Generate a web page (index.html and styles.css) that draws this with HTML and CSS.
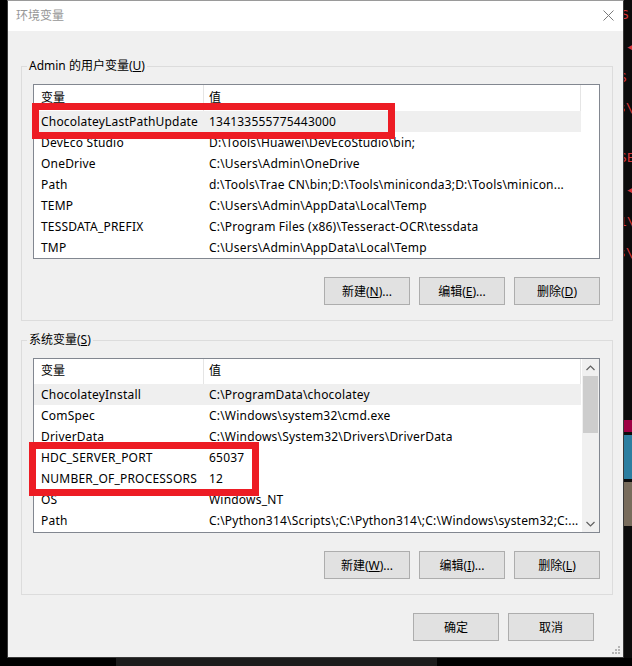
FILE: index.html
```html
<!DOCTYPE html>
<html lang="zh-CN">
<head>
<meta charset="utf-8">
<title>环境变量</title>
<link rel="stylesheet" href="styles.css">
</head>
<body>
<div class="screen">
  <div class="top">
    <div class="left-gap"></div>
    <div class="window">
      <div class="titlebar">
        <span class="title">环境变量</span>
        <svg class="close" width="11" height="11" viewBox="0 0 11 11"><path d="M0.5 0.5L10.5 10.5M10.5 0.5L0.5 10.5" stroke="#7a7a7a" stroke-width="1" fill="none"/></svg>
      </div>
      <div class="content">
        <fieldset class="group group-user">
          <legend>Admin 的用户变量(<u>U</u>)</legend>
          <div class="list">
            <div class="table">
              <div class="row head"><div class="c1">变量</div><div class="c2">值</div></div>
              <div class="row sel"><div class="c1">ChocolateyLastPathUpdate</div><div class="c2">134133555775443000</div></div>
              <div class="row"><div class="c1">DevEco Studio</div><div class="c2">D:\Tools\Huawei\DevEcoStudio\bin;</div></div>
              <div class="row"><div class="c1">OneDrive</div><div class="c2">C:\Users\Admin\OneDrive</div></div>
              <div class="row"><div class="c1">Path</div><div class="c2">d:\Tools\Trae CN\bin;D:\Tools\miniconda3;D:\Tools\minicon...</div></div>
              <div class="row"><div class="c1">TEMP</div><div class="c2">C:\Users\Admin\AppData\Local\Temp</div></div>
              <div class="row"><div class="c1">TESSDATA_PREFIX</div><div class="c2">C:\Program Files (x86)\Tesseract-OCR\tessdata</div></div>
              <div class="row"><div class="c1">TMP</div><div class="c2">C:\Users\Admin\AppData\Local\Temp</div></div>
            </div>
            <div class="annot annot-user"></div>
          </div>
          <div class="btns">
            <button class="btn">新建(<u>N</u>)...</button>
            <button class="btn">编辑(<u>E</u>)...</button>
            <button class="btn">删除(<u>D</u>)</button>
          </div>
        </fieldset>

        <fieldset class="group group-sys">
          <legend>系统变量(<u>S</u>)</legend>
          <div class="list">
            <div class="table">
              <div class="row head sys-head"><div class="c1">变量</div><div class="c2">值</div></div>
              <div class="row sel"><div class="c1">ChocolateyInstall</div><div class="c2">C:\ProgramData\chocolatey</div></div>
              <div class="row"><div class="c1">ComSpec</div><div class="c2">C:\Windows\system32\cmd.exe</div></div>
              <div class="row"><div class="c1">DriverData</div><div class="c2">C:\Windows\System32\Drivers\DriverData</div></div>
              <div class="row"><div class="c1">HDC_SERVER_PORT</div><div class="c2">65037</div></div>
              <div class="row"><div class="c1">NUMBER_OF_PROCESSORS</div><div class="c2">12</div></div>
              <div class="row"><div class="c1">OS</div><div class="c2">Windows_NT</div></div>
              <div class="row"><div class="c1">Path</div><div class="c2">C:\Python314\Scripts\;C:\Python314\;C:\Windows\system32;C:...</div></div>
            </div>
            <div class="scrollbar">
              <div class="sb-arrow"><svg width="9" height="6" viewBox="0 0 9 6"><path d="M0.5 5L4.5 1L8.5 5" stroke="#606060" stroke-width="1.2" fill="none"/></svg></div>
              <div class="sb-thumb"></div>
              <div class="sb-track"></div>
              <div class="sb-arrow"><svg width="9" height="6" viewBox="0 0 9 6"><path d="M0.5 1L4.5 5L8.5 1" stroke="#606060" stroke-width="1.2" fill="none"/></svg></div>
            </div>
            <div class="annot annot-sys"></div>
          </div>
          <div class="btns">
            <button class="btn">新建(<u>W</u>)...</button>
            <button class="btn">编辑(<u>I</u>)...</button>
            <button class="btn">删除(<u>L</u>)</button>
          </div>
        </fieldset>

        <div class="dialog-btns">
          <button class="btn">确定</button>
          <button class="btn">取消</button>
        </div>
      </div>
      <svg class="grip" width="10" height="10" viewBox="0 0 10 10">
        <rect x="7" y="0" width="2" height="2" fill="#b5b5b5"/>
        <rect x="4" y="3" width="2" height="2" fill="#b5b5b5"/>
        <rect x="7" y="3" width="2" height="2" fill="#b5b5b5"/>
        <rect x="1" y="6" width="2" height="2" fill="#b5b5b5"/>
        <rect x="4" y="6" width="2" height="2" fill="#b5b5b5"/>
        <rect x="7" y="6" width="2" height="2" fill="#b5b5b5"/>
      </svg>
    </div>
    <div class="term">
      <div class="term-text">
        <div class="tl tl1">S</div>
        <div class="tl tl2">◂</div>
        <div class="tl tl3">S</div>
        <div class="tl tl4">s\</div>
        <div class="tl tl5">SE</div>
        <div class="tl tl6">◂</div>
        <div class="tl tl7">1\</div>
        <div class="tl tl8">s\</div>
      </div>
      <div class="blk blk-red"></div>
      <div class="blk blk-teal"></div>
      <div class="blk blk-brown"></div>
    </div>
  </div>
  <div class="bottom">
    <div class="b1"></div>
    <div class="b2"></div>
    <div class="b3"></div>
  </div>
</div>
</body>
</html>
```

FILE: styles.css
```css
html, body {
  margin: 0;
  padding: 0;
  background: #000;
}

.screen {
  width: 632px;
  height: 666px;
  overflow: hidden;
  font-family: "Noto Sans", "Noto Sans CJK SC", sans-serif;
  font-size: 12px;
  color: #000;
}

.top {
  display: flex;
  height: 658px;
}

.left-gap {
  width: 7px;
  flex: none;
  background: #000;
}

.window {
  width: 617px;
  flex: none;
  box-sizing: border-box;
  border: 1px solid #3a3a3a;
  border-top-color: #9a9a9a;
  background: #f0f0f0;
  position: relative;
  display: flex;
  flex-direction: column;
}

.titlebar {
  height: 30px;
  flex: none;
  background: #fff;
  display: flex;
  align-items: center;
  justify-content: space-between;
  padding: 0 9px 0 8px;
}

.title {
  color: #969696;
  font-size: 12px;
  line-height: 16px;
}

.close {
  display: block;
  margin-top: -1px;
}

.content {
  padding: 0 10px 0 13px;
  display: flex;
  flex-direction: column;
}

.group {
  margin: 0;
  border: 1px solid #dcdcdc;
  padding: 0 12px 15px 11px;
  min-width: 0;
}

.group legend {
  padding: 0 2px;
  margin-left: -6px;
  line-height: 16px;
  font-size: 12px;
}

.group-user {
  margin-top: 27px;
}

.group-sys {
  margin-top: 11px;
}

.list {
  position: relative;
  margin-top: 10px;
  height: 175px;
  box-sizing: border-box;
  border: 1px solid #828790;
  background: #fff;
  display: flex;
}

.table {
  width: 547px;
  flex: none;
}

.row {
  display: flex;
  height: 21px;
  line-height: 21px;
  white-space: nowrap;
  letter-spacing: 0.2px;
}

.row .c1 {
  width: 170px;
  box-sizing: border-box;
  padding-left: 7px;
  flex: none;
  overflow: hidden;
}

.row .c2 {
  flex: 1;
  padding-left: 5px;
  overflow: hidden;
}

.row.head {
  height: 26px;
  line-height: 25px;
  letter-spacing: 0;
}

.row.head.sys-head {
  height: 25px;
  line-height: 24px;
}

.row.head .c1,
.row.head .c2 {
  border-right: 1px solid #e5e5e5;
}

.row.sel {
  background: #efefef;
}

.scrollbar {
  width: 17px;
  margin-left: 1px;
  flex: none;
  background: #f0f0f0;
  display: flex;
  flex-direction: column;
}

.sb-arrow {
  height: 17px;
  flex: none;
  display: flex;
  align-items: center;
  justify-content: center;
}

.sb-thumb {
  height: 57px;
  margin: 0 1px;
  background: #cdcdcd;
  flex: none;
}

.sb-track {
  flex: 1;
}

.annot {
  position: absolute;
  box-sizing: border-box;
  border: 7px solid #ed1c24;
}

.annot-user {
  left: -2px;
  top: 18px;
  width: 363px;
  height: 36px;
}

.annot-sys {
  left: -5px;
  top: 83px;
  width: 230px;
  height: 54px;
}

.btns {
  display: flex;
  justify-content: flex-end;
  gap: 9px;
  margin-top: 18px;
}

.btn {
  width: 86px;
  height: 28px;
  box-sizing: border-box;
  border: 1px solid #adadad;
  background: #e1e1e1;
  font-family: inherit;
  font-size: 12px;
  color: #000;
  padding: 0;
  display: flex;
  align-items: center;
  justify-content: center;
}

.dialog-btns {
  display: flex;
  justify-content: flex-end;
  gap: 9px;
  margin-top: 18px;
  margin-right: 19px;
}

.grip {
  position: absolute;
  right: 2px;
  bottom: 1px;
}

.term {
  width: 8px;
  flex: none;
  background: #0c0c0c;
  overflow: hidden;
  display: flex;
  flex-direction: column;
}

.term-text {
  height: 420px;
  flex: none;
  color: #d8363a;
  font-family: "DejaVu Sans Mono", monospace;
  font-size: 13px;
  line-height: 16px;
}

.tl {
  white-space: nowrap;
  margin-left: -3px;
}

.tl1 { margin-top: 7px; }
.tl2 { margin-top: 16px; margin-left: 2px; }
.tl3 { margin-top: 15px; margin-left: -5px; }
.tl4 { margin-top: 14px; margin-left: -6px; }
.tl5 { margin-top: 34px; margin-left: -5px; }
.tl6 { margin-top: 16px; margin-left: 2px; }
.tl7 { margin-top: 16px; margin-left: -5px; }
.tl8 { margin-top: 15px; margin-left: -6px; }

.blk {
  flex: none;
}

.blk-red {
  height: 12px;
  background: #9e0044;
}

.blk-teal {
  height: 44px;
  margin-top: 3px;
  background: #2c7ea0;
}

.blk-brown {
  height: 44px;
  margin-top: 3px;
  background: #786c5c;
}

.bottom {
  display: flex;
  height: 8px;
}

.b1 {
  width: 116px;
  background: #000;
}

.b2 {
  width: 321px;
  background: #1c1c1c;
}

.b3 {
  flex: 1;
  background: #000;
}
```
